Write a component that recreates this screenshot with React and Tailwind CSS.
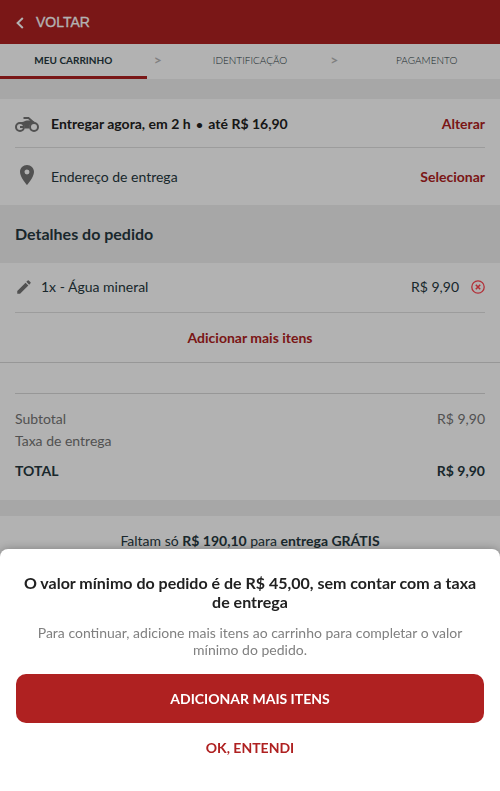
import React, { useState } from 'react';
import { MdEdit, MdPlace } from 'react-icons/md';

const steps = ['Meu carrinho', 'Identificação', 'Pagamento'];

const Header = () => (
  <header className="h-11 bg-[#af2121] flex items-center px-4">
    <button type="button" className="flex items-center gap-3 text-white text-sm font-['Liberation_Sans',sans-serif]">
      <svg width="8" height="12" viewBox="0 0 8 12" fill="none" stroke="currentColor" strokeWidth="2" aria-hidden="true" className="mt-px">
        <path d="M6.8 1 1.6 6l5.2 5" />
      </svg>
      <span className="font-medium [-webkit-text-stroke:0.3px_currentColor]">VOLTAR</span>
    </button>
  </header>
);

const Steps = ({ current }) => (
  <ol className="flex h-[35px] bg-white text-[10px] uppercase">
    {steps.map((step, index) => (
      <React.Fragment key={step}>
        {index > 0 && (
          <li aria-hidden="true" className="w-[30px] pl-[7px] leading-8 text-sm font-bold text-[#b8b8b8]">
            &gt;
          </li>
        )}
        <li
          className={
            index === current
              ? 'flex-1 text-center leading-8 font-bold text-[#263840] border-b-3 border-[#af2121]'
              : 'flex-1 text-center leading-8 font-light text-[#263840]'
          }
        >
          {step}
        </li>
      </React.Fragment>
    ))}
  </ol>
);

const MotorcycleIcon = () => (
  <svg width="24" height="24" viewBox="0 0 24 24" aria-hidden="true" className="mr-3 text-[#757575]">
    <g fill="none" stroke="currentColor" strokeWidth="2">
      <circle cx="5" cy="15" r="4" />
      <circle cx="19" cy="15" r="4" />
      <path d="M5 15h4M8.5 6h5l5 4.5" />
    </g>
    <path
      fill="currentColor"
      d="M4 10h3c2 0 3-1.5 5-1.5h4.5L20 10c-3.5.3-6 2.7-6 6.500h-4C10 13 8 11 4 10z"
    />
  </svg>
);

const RemoveIcon = () => (
  <svg width="14" height="14" viewBox="0 0 14 14" fill="none" stroke="currentColor" aria-hidden="true">
    <circle cx="7" cy="7" r="6.2" strokeWidth="1.3" />
    <path d="m4.8 4.8 4.400 4.400m0-4.400L4.800 9.200" strokeWidth="1.6" />
  </svg>
);

const Delivery = () => (
  <section className="bg-white px-[15px]">
    <div className="flex items-center h-[49px] pt-0.5 border-b border-[#e0e0e0]">
      <MotorcycleIcon />
      <p className="flex-1 font-bold text-[#212121]">
        Entregar agora, em 2 h <span className="mx-0.5 text-xs">•</span> até R$ 16,90
      </p>
      <button type="button" className="font-bold text-[#af2121]">Alterar</button>
    </div>
    <div className="flex items-center h-[57px]">
      <MdPlace className="w-6 h-6 mr-3 mb-1 text-[#757575]" />
      <p className="flex-1 text-[#263840]">Endereço de entrega</p>
      <button type="button" className="font-bold text-[#af2121]">Selecionar</button>
    </div>
  </section>
);

const Order = () => (
  <section>
    <h2 className="h-[58px] px-[15px] text-base leading-[58px] font-bold text-[#263840]">Detalhes do pedido</h2>
    <div className="bg-white border-b border-[#d8d8d8]">
      <div className="mx-[15px] h-[50px] pb-0.5 flex items-center border-b border-[#e0e0e0] text-[#263840]">
        <button type="button" aria-label="Editar item" className="mr-2 text-[#757575]">
          <MdEdit className="w-[18px] h-[18px]" />
        </button>
        <p className="flex-1">1x - Água mineral</p>
        <span>R$ 9,90</span>
        <button type="button" aria-label="Remover item" className="ml-3 text-[#ff4450]">
          <RemoveIcon />
        </button>
      </div>
      <button type="button" className="block w-full h-[49px] font-bold text-[#af2121]">
        Adicionar mais itens
      </button>
    </div>
  </section>
);

const Totals = () => (
  <section className="bg-white px-[15px] pt-[30px] pb-[18px]">
    <dl className="border-t border-[#d8d8d8] pt-[14px] text-[#757575] leading-[22px]">
      <div className="flex justify-between">
        <dt>Subtotal</dt>
        <dd>R$ 9,90</dd>
      </div>
      <div className="flex justify-between">
        <dt>Taxa de entrega</dt>
      </div>
      <div className="flex justify-between mt-2 font-bold text-[#263840]">
        <dt>TOTAL</dt>
        <dd>R$ 9,90</dd>
      </div>
    </dl>
  </section>
);

const MinimumOrderDialog = ({ onClose }) => (
  <div className="fixed inset-0 flex items-end bg-black/30">
    <div
      role="dialog"
      aria-modal="true"
      aria-labelledby="minimum-title"
      className="w-full bg-white rounded-t-lg px-4 pt-6 pb-[25px] text-center shadow-[0_0_10px_rgba(0,0,0,0.3)]"
    >
      <h3 id="minimum-title" className="text-base leading-[19px] font-bold text-[#212121]">
        O valor mínimo do pedido é de R$ 45,00, sem contar com a taxa de entrega
      </h3>
      <p className="mt-[13px] px-4 leading-[17px] text-[#808080]">
        Para continuar, adicione mais itens ao carrinho para completar o valor mínimo do pedido.
      </p>
      <button
        type="button"
        onClick={onClose}
        className="block w-full h-[49px] mt-4 rounded-[10px] bg-[#af2121] font-bold text-white"
      >
        ADICIONAR MAIS ITENS
      </button>
      <button type="button" onClick={onClose} className="block w-full h-9 mt-[7px] font-bold text-[#af2121]">
        OK, ENTENDI
      </button>
    </div>
  </div>
);

const App = () => {
  const [showDialog, setShowDialog] = useState(true);

  return (
    <div className="min-h-screen bg-[#f0f0f0] text-sm font-[Lato,sans-serif]">
      <Header />
      <Steps current={0} />
      <main className="pt-5">
        <Delivery />
        <Order />
        <Totals />
        <p className="mt-4 py-[15px] bg-white text-center text-[#263840]">
          Faltam só <b>R$ 190,10</b> para <b>entrega GRÁTIS</b>
        </p>
      </main>
      {showDialog && <MinimumOrderDialog onClose={() => setShowDialog(false)} />}
    </div>
  );
};

export default App;
